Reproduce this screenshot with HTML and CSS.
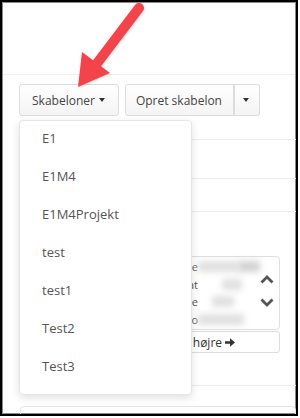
FILE: index.html
```html
<!DOCTYPE html>
<html>
    <head>
        <meta charset="UTF-8">
        <title>Skabeloner</title>
        <link rel="stylesheet" href="styles.css">
    </head>
    <body>
        <div class="frame">
            <div class="header"></div>
            <div class="toolbar">
                <div class="btn-group">
                    <button class="btn">Skabeloner <span class="caret"></span></button>
                    <ul class="dropdown-menu">
                        <li>E1</li>
                        <li>E1M4</li>
                        <li>E1M4Projekt</li>
                        <li>test</li>
                        <li>test1</li>
                        <li>Test2</li>
                        <li>Test3</li>
                    </ul>
                </div>
                <div class="btn-group split">
                    <button class="btn">Opret skabelon</button>
                    <button class="btn btn-caret"><span class="caret"></span></button>
                </div>
            </div>
            <div class="list">
                <div class="list-row row-a"></div>
                <div class="list-row row-b"></div>
                <div class="list-row row-c"></div>
                <div class="picker">
                    <div class="picker-box">
                        <div class="picker-items">
                            <div class="picker-item"><span class="word">Kode</span><span class="blob" style="width:40px"></span><span class="blob dark" style="width:22px"></span></div>
                            <div class="picker-item"><span class="word">Sat</span><span class="blob" style="width:20px;margin-left:24px"></span></div>
                            <div class="picker-item"><span class="word">Type</span><span class="blob" style="width:22px;margin-left:14px"></span></div>
                            <div class="picker-item"><span class="word">Info</span><span class="blob" style="width:46px"></span></div>
                        </div>
                        <div class="picker-arrows">
                            <svg width="14" height="9" viewBox="0 0 14 9"><polyline points="1.5,7.5 7,2 12.5,7.5" fill="none" stroke="#555" stroke-width="2.8"/></svg>
                            <svg width="14" height="9" viewBox="0 0 14 9"><polyline points="1.5,1.5 7,7 12.5,1.5" fill="none" stroke="#555" stroke-width="2.8"/></svg>
                        </div>
                    </div>
                    <button class="btn btn-small">Til højre <svg class="arrow-right" width="10" height="9" viewBox="0 0 10 9"><path d="M0 3.2H5V0.3L10 4.5L5 8.7V5.8H0Z" fill="#333"/></svg></button>
                </div>
                <div class="list-row row-d"></div>
                <div class="panel"></div>
            </div>
        </div>
        <svg class="pointer" width="300" height="418" viewBox="0 0 300 418">
            <line x1="139" y1="8" x2="95" y2="66" stroke="#f3444c" stroke-width="10" stroke-linecap="round"/>
            <polygon points="78,87 82,52 110,73" fill="#f3444c"/>
        </svg>
    </body>
</html>
```

FILE: styles.css
```css
*, *::before, *::after {
    box-sizing: border-box;
}
html, body {
    margin: 0;
    padding: 0;
    background: #fff;
}
body {
    position: relative;
    width: 300px;
    height: 418px;
    font-family: "Open Sans", sans-serif;
    color: #444;
}
.frame {
    position: relative;
    width: 298px;
    height: 416px;
    border: 2px solid #000;
    box-shadow: inset 0 0 0 1px #8a8a8a;
    overflow: hidden;
}
.header {
    height: 73px;
    margin: 0 1px;
    border-bottom: 1px solid #efefef;
}
.toolbar {
    display: flex;
    gap: 6px;
    margin: 9px 0 0 17px;
}
.btn-group {
    position: relative;
    display: flex;
}
.btn {
    display: flex;
    align-items: center;
    height: 32px;
    margin: 0;
    padding: 0 13px 0 12px;
    font-family: "Open Sans", sans-serif;
    font-size: 12px;
    color: #444;
    background: linear-gradient(#fff, #f4f4f4);
    border: 1px solid #dcdcdc;
    border-radius: 3px;
}
.split .btn {
    padding: 0 11px 0 10px;
    border-radius: 3px 0 0 3px;
}
.split .btn-caret {
    width: 26px;
    padding: 0;
    justify-content: center;
    border-left: none;
    border-radius: 0 3px 3px 0;
    box-shadow: inset 1px 0 0 #dcdcdc;
}
.caret {
    display: inline-block;
    width: 0;
    height: 0;
    margin-left: 4px;
    border-top: 4px solid #333;
    border-left: 3.5px solid transparent;
    border-right: 3.5px solid transparent;
}
.btn-caret .caret {
    margin-left: 0;
}
.dropdown-menu {
    position: absolute;
    top: calc(100% + 4px);
    left: 0;
    z-index: 5;
    width: 173px;
    margin: 0;
    padding: 0 0 9px 0;
    list-style: none;
    background: #fff;
    border: 1px solid #e6e6e6;
    border-radius: 4px;
    box-shadow: 0 3px 8px rgba(0, 0, 0, 0.12);
}
.dropdown-menu li {
    padding: 0 22px;
    line-height: 38px;
    font-size: 13px;
    color: #555;
}
.dropdown-menu li:first-child {
    margin-top: -2px;
}
.list {
    margin-left: 17px;
}
.list-row {
    border-bottom: 1px solid #ececec;
}
.row-a {
    height: 24px;
}
.row-b {
    height: 39px;
}
.row-c {
    height: 33px;
}
.row-d {
    height: 33px;
}
.picker {
    width: 130px;
    margin: 44px 16px 0 auto;
}
.picker-box {
    display: flex;
    justify-content: space-between;
    height: 74px;
    padding: 0 6px 0 8px;
    border: 1px solid #dedede;
    border-radius: 4px;
}
.picker-items {
    padding-top: 1px;
}
.picker-item {
    display: flex;
    align-items: center;
    height: 17.5px;
    font-size: 11px;
    color: #555;
}
.word {
    width: 39px;
    text-align: right;
}
.blob {
    display: inline-block;
    height: 11px;
    background: #e0e0e0;
    filter: blur(3px);
}
.blob.dark {
    background: #d2d2d2;
}
.picker-arrows {
    display: flex;
    flex-direction: column;
    gap: 14px;
    padding-top: 18px;
}
.btn-small {
    width: 130px;
    height: 22px;
    margin-top: 1px;
    padding: 0 0 0 26px;
    font-size: 12px;
    color: #333;
    background: #fff;
}
.arrow-right {
    margin-left: 3px;
}
.panel {
    height: 40px;
    margin: 20px 0 0 1px;
    border: 1px solid #e4e4e4;
    border-radius: 4px;
}
.pointer {
    position: absolute;
    top: 0;
    left: 0;
    z-index: 10;
    filter: drop-shadow(1px 1px 1px rgba(0, 0, 0, 0.15));
}
```
